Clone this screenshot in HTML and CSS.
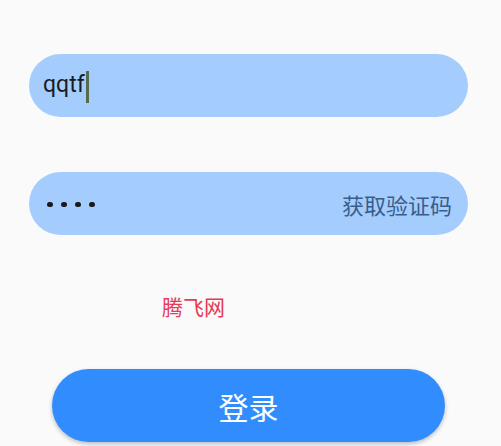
FILE: index.html
```html
<!DOCTYPE html>
<html lang="zh">
<head>
<meta charset="utf-8">
<link rel="stylesheet" href="styles.css">
</head>
<body>
<div class="page">
  <div class="field">
    <span class="value">qqtf</span><span class="cursor"></span>
  </div>
  <div class="field field-code">
    <div class="dots"><span class="dot"></span><span class="dot"></span><span class="dot"></span><span class="dot"></span></div>
    <span class="hint">获取验证码</span>
  </div>
  <div class="brand">腾飞网</div>
  <button class="login">登录</button>
</div>
</body>
</html>
```
FILE: styles.css
```css
html, body {
  margin: 0;
  padding: 0;
  background: #fafafa;
}
.page {
  width: 501px;
  height: 446px;
  box-sizing: border-box;
  padding: 54px 33px 0 29px;
  overflow: hidden;
  font-family: Roboto, "Noto Sans CJK SC", sans-serif;
}
.field {
  height: 63px;
  border-radius: 32px;
  background: #a4cdfd;
  display: flex;
  align-items: center;
  padding: 0 16px 0 14px;
  box-sizing: border-box;
}
.value {
  font-family: Roboto, sans-serif;
  font-size: 23px;
  color: #1c1c1e;
  position: relative;
  top: -1px;
}
.cursor {
  width: 3px;
  height: 32px;
  margin-left: 1px;
  background: #566a4e;
  position: relative;
  top: 1px;
}
.field-code {
  margin-top: 55px;
  justify-content: space-between;
}
.dots {
  display: flex;
  gap: 8.5px;
  margin-left: 4px;
  position: relative;
  top: 1px;
}
.dot {
  width: 5.5px;
  height: 5.5px;
  border-radius: 50%;
  background: #1a1a1c;
}
.hint {
  font-family: "Noto Sans CJK SC", sans-serif;
  font-size: 22px;
  line-height: 26px;
  color: #395d8c;
}
.brand {
  margin: 59px 0 0 133px;
  font-family: "Noto Sans CJK SC", sans-serif;
  font-size: 21px;
  line-height: 24px;
  color: #e63a55;
}
.login {
  display: block;
  margin: 51px 0 0 23px;
  width: 393px;
  height: 73px;
  border: none;
  border-radius: 37px;
  background: #318dfe;
  color: #ffffff;
  font-family: "Noto Sans CJK SC", sans-serif;
  font-size: 30px;
  line-height: 36px;
  padding: 0;
  box-shadow: 0 2px 4px rgba(0, 0, 0, 0.25);
}
```
